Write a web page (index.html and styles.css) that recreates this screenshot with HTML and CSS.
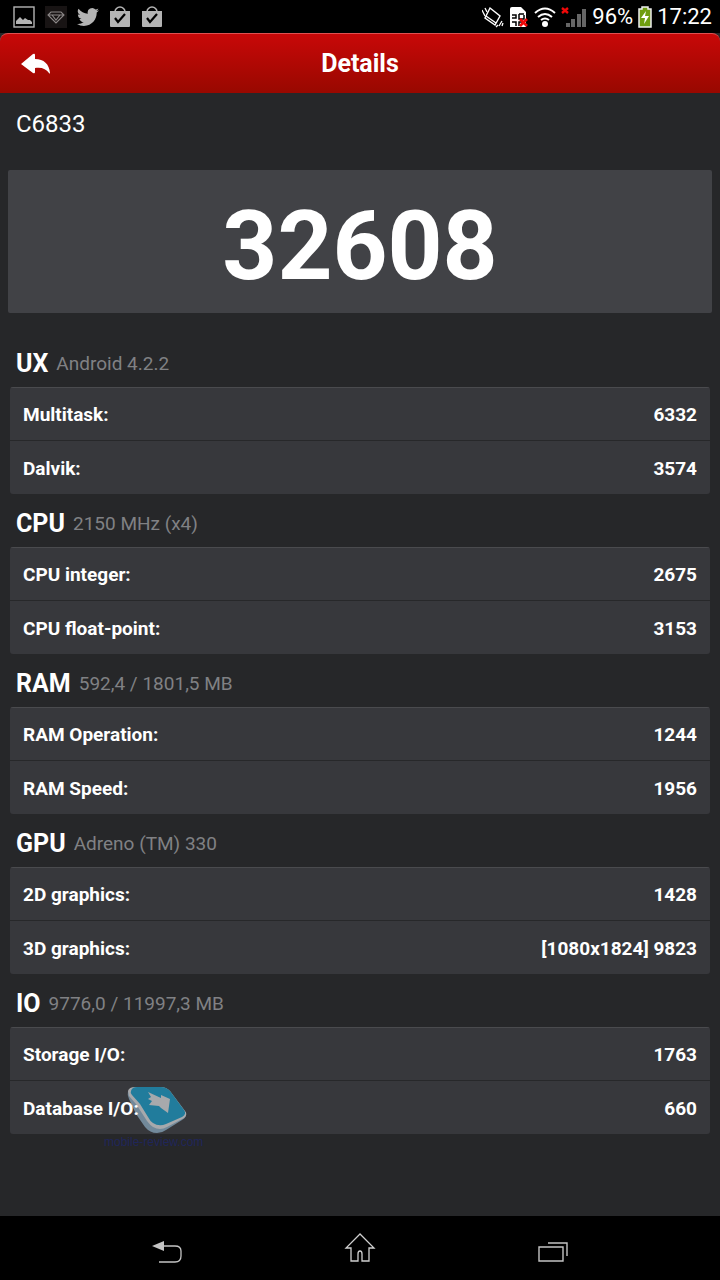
FILE: index.html
```html
<!DOCTYPE html>
<html lang="en">
<head>
    <meta charset="UTF-8">
    <meta name="viewport" content="width=device-width, initial-scale=1.0">
    <title>Details</title>
    <link rel="stylesheet" href="styles.css">
</head>
<body>
    <div class="status">
        <div class="notifications">
            <svg width="22" height="22" viewBox="0 0 22 22">
                <rect x="1" y="1" width="20" height="20" fill="none" stroke="#b4b4b4" stroke-width="1.4"/>
                <path d="M3 18v-3l4-4 3 3 2-2 3 2 2 0 2 2v2z" fill="#b4b4b4"/>
            </svg>
            <svg width="22" height="22" viewBox="0 0 22 22">
                <rect width="22" height="22" fill="#181414"/>
                <path d="M6 6h10l3 3-8 8-8-8zM3 9h16M7 9l4 5 4-5" fill="none" stroke="#8c8888" stroke-width="1.1"/>
            </svg>
            <svg width="22" height="22" viewBox="0 0 24 24">
                <path d="M24 4.6a10 10 0 0 1-2.8.8 5 5 0 0 0 2.1-2.7 10 10 0 0 1-3.1 1.2 4.9 4.9 0 0 0-8.4 4.5A14 14 0 0 1 1.7 3.1a4.9 4.9 0 0 0 1.5 6.6 5 5 0 0 1-2.2-.6 4.9 4.9 0 0 0 3.9 4.9 5 5 0 0 1-2.2.1 4.9 4.9 0 0 0 4.6 3.4A10 10 0 0 1 0 19.5a14 14 0 0 0 7.5 2.2c9.1 0 14-7.5 14-14v-.6A10 10 0 0 0 24 4.6z" fill="#b4b4b4"/>
            </svg>
            <svg width="22" height="22" viewBox="0 0 22 22">
                <path d="M6 6a5 5 0 0 1 10 0" fill="none" stroke="#b4b4b4" stroke-width="1.6"/>
                <path d="M1 5h20v15q0 1-1 1H2q-1 0-1-1z" fill="#b4b4b4"/>
                <path d="M6 12l3 4 7-8" fill="none" stroke="#000" stroke-width="2.2"/>
            </svg>
            <svg width="22" height="22" viewBox="0 0 22 22">
                <path d="M6 6a5 5 0 0 1 10 0" fill="none" stroke="#b4b4b4" stroke-width="1.6"/>
                <path d="M1 5h20v15q0 1-1 1H2q-1 0-1-1z" fill="#b4b4b4"/>
                <path d="M6 12l3 4 7-8" fill="none" stroke="#000" stroke-width="2.2"/>
            </svg>
        </div>
        <div class="system">
            <svg width="22" height="22" viewBox="0 0 22 22" fill="none" stroke="#fff">
                <path d="M8 2l10 8-5 9L3 12zM4 10l10 7" stroke-width="1.4"/>
                <path d="M0 4l3 6M3 2l2 4M17 20l3-5M14 21l2-2M20 20l1-3" stroke-width="1.3"/>
            </svg>
            <svg width="20" height="22" viewBox="0 0 20 22">
                <path d="M1 3q0-2 2-2h9l5 5v15H1z" fill="#fff"/>
                <path d="M3 9h4v3H3M3 16h4v4M10 8h5M10 8v5h5V9M10 20v-4h4" fill="none" stroke="#000" stroke-width="1.5"/>
                <path d="M11 13l7 7M18 13l-7 7" stroke="#f00808" stroke-width="2.6"/>
            </svg>
            <svg width="22" height="22" viewBox="0 0 22 22" fill="none" stroke="#fff" stroke-width="2">
                <path d="M1 7q10-9 20 0M4 11q7-6 14 0M7 14q4-3 8 0"/>
                <circle cx="11" cy="18" r="3" fill="#fff" stroke="none"/>
            </svg>
            <svg width="26" height="22" viewBox="0 0 26 22">
                <path d="M5 17h4v4H5zM10 13h4v8h-4zM16 8h4v13h-4zM21 3h4v18h-4z" fill="#666"/>
                <path d="M1 2l6 5M7 2l-6 5" stroke="#f00808" stroke-width="2.4"/>
            </svg>
            <span>96%</span>
            <svg width="14" height="22" viewBox="0 0 14 22">
                <path d="M4 1h6v2h3v18H1V3h3z" fill="#6f9d10" stroke="#eee" stroke-width="1.5"/>
                <path d="M8 5l-5 7h4l-1 6 5-8H7z" fill="#fff"/>
            </svg>
            <span>17:22</span>
        </div>
    </div>

    <header class="bar">
        <button class="back" aria-label="Back">
            <svg width="30" height="22" viewBox="0 0 30 22">
                <path d="M0 11L12 1q2-1 2 1v4c9 0 14 5 15 14q0 1-1 0c-3-4-7-6-14-5v4q0 2-2 1z" fill="#fff"/>
            </svg>
        </button>
        <h1>Details</h1>
    </header>

    <main>
        <p class="device">C6833</p>
        <div class="score">32608</div>

        <section>
            <h2 id="ux">UX <small>Android 4.2.2</small></h2>
            <table aria-labelledby="ux">
                <tr><th scope="row">Multitask:</th><td>6332</td></tr>
                <tr><th scope="row">Dalvik:</th><td>3574</td></tr>
            </table>
        </section>
        <section>
            <h2 id="cpu">CPU <small>2150 MHz (x4)</small></h2>
            <table aria-labelledby="cpu">
                <tr><th scope="row">CPU integer:</th><td>2675</td></tr>
                <tr><th scope="row">CPU float-point:</th><td>3153</td></tr>
            </table>
        </section>
        <section>
            <h2 id="ram">RAM <small>592,4 / 1801,5 MB</small></h2>
            <table aria-labelledby="ram">
                <tr><th scope="row">RAM Operation:</th><td>1244</td></tr>
                <tr><th scope="row">RAM Speed:</th><td>1956</td></tr>
            </table>
        </section>
        <section>
            <h2 id="gpu">GPU <small>Adreno (TM) 330</small></h2>
            <table aria-labelledby="gpu">
                <tr><th scope="row">2D graphics:</th><td>1428</td></tr>
                <tr><th scope="row">3D graphics:</th><td>[1080x1824] 9823</td></tr>
            </table>
        </section>
        <section>
            <h2 id="io">IO <small>9776,0 / 11997,3 MB</small></h2>
            <table aria-labelledby="io">
                <tr><th scope="row">Storage I/O:</th><td>1763</td></tr>
                <tr><th scope="row">Database I/O:</th><td>660</td></tr>
            </table>
            <div class="watermark">
                <svg width="60" height="48" viewBox="0 0 60 48">
                    <path d="M1 5Q0 9 2 13l7 15 9 13q5 6 12 6 5 0 9-3l16-10q5-3 4-8L40 20z" fill="#72899a"/>
                    <path d="M1 5q1-4 7-4h26q5 0 9 4l15 20q3 4-1 7L40 41q-7 4-14 0-3-2-6-6L9 18 2 10z" fill="#a7a9ac"/>
                    <path d="M4 5q1-4 6-4h24q5 0 9 4l14 19q3 4-2 7l-16 7q-7 3-13-1-3-2-5-6L13 18 5 9q-2-2-1-4z" fill="#217c9c"/>
                    <path d="M21 6l13 6v-3l9 4-2 14-7-5-2-2-10-1 3-4-4-2 3-2z" fill="#a7a9ac"/>
                </svg>
                <span>mobile-review.com</span>
            </div>
        </section>
    </main>

    <nav>
        <button aria-label="Return">
            <svg width="32" height="24" viewBox="0 0 32 24">
                <path d="M1 7l12-5v10z" fill="#c4c4c4"/>
                <path d="M12 7h12q6 0 6 5v5q0 6-6 6H8" fill="none" stroke="#c4c4c4" stroke-width="1.3"/>
            </svg>
        </button>
        <button aria-label="Home">
            <svg width="32" height="30" viewBox="0 0 32 30">
                <path d="M16 1L2 15h5v13h7v-7q0-3 2-3t2 3v7h7V15h5z" fill="none" stroke="#d0d0d0" stroke-width="1.3"/>
            </svg>
        </button>
        <button aria-label="Recent apps">
            <svg width="32" height="22" viewBox="0 0 32 22" fill="none" stroke="#c4c4c4" stroke-width="1.4">
                <path d="M2 6h24v14H2zM11 2h19v13"/>
            </svg>
        </button>
    </nav>
</body>
</html>
```

FILE: styles.css
```css
html, body {
    margin: 0;
    padding: 0;
}
body {
    display: flex;
    flex-direction: column;
    min-height: 100vh;
    background: #262729;
    color: #fff;
    font-family: Roboto, sans-serif;
}
svg {
    display: block;
    flex: none;
}
button {
    padding: 0;
    border: 0;
    background: none;
    cursor: pointer;
}

.status {
    display: flex;
    justify-content: space-between;
    align-items: center;
    height: 33px;
    padding: 0 8px 0 13px;
    background: #000;
    font-size: 22px;
}
.notifications, .system {
    display: flex;
    align-items: center;
}
.notifications {
    gap: 10px;
}
.system {
    gap: 5px;
}
.system span {
    line-height: 34px;
}

.bar {
    display: grid;
    grid-template-columns: 1fr auto 1fr;
    align-items: center;
    height: 60px;
    padding: 0 21px;
    box-sizing: border-box;
    border-top: 1px solid #e05050;
    border-radius: 8px 8px 0 0;
    background: linear-gradient(#c80808, #980800);
}
.back {
    justify-self: start;
}
h1 {
    margin: 0;
    font-size: 25px;
}

main {
    flex: 1;
}
.device {
    margin: 0 16px;
    font-size: 24px;
    line-height: 62px;
}
.score {
    margin: 15px 8px 21px;
    padding-top: 9px;
    border-radius: 2px;
    background: #414246;
    font-size: 96px;
    font-weight: bold;
    line-height: 134px;
    text-align: center;
}

section {
    position: relative;
    padding: 5px 10px 0;
}
h2 {
    display: flex;
    align-items: center;
    gap: 8px;
    height: 48px;
    margin: 0;
    padding-left: 6px;
    font-size: 25px;
}
h2 small {
    color: #808184;
    font-size: 19px;
    font-weight: normal;
}
table {
    width: 100%;
    border-spacing: 0;
    border-radius: 3px;
    overflow: hidden;
    background: #37383c;
    font-size: 19px;
    font-weight: bold;
}
th, td {
    padding: 2px 13px 0;
    border-top: 1px solid #4a4b4e;
    line-height: 50px;
}
th {
    position: relative;
    z-index: 1;
    text-align: left;
}
td {
    text-align: right;
}
tr + tr th, tr + tr td {
    border-color: #27282a;
    line-height: 51px;
}

/* sits over the last table, under its labels */
.watermark {
    position: absolute;
    left: 104px;
    bottom: -16px;
    display: flex;
    flex-direction: column;
    align-items: center;
    color: #20265a;
    font: 12px/16px "Liberation Sans", sans-serif;
}
.watermark svg {
    margin-left: 6px;
}

nav {
    display: flex;
    justify-content: center;
    align-items: flex-end;
    gap: 161px;
    height: 64px;
    padding-bottom: 17px;
    box-sizing: border-box;
    background: #000;
}
```
